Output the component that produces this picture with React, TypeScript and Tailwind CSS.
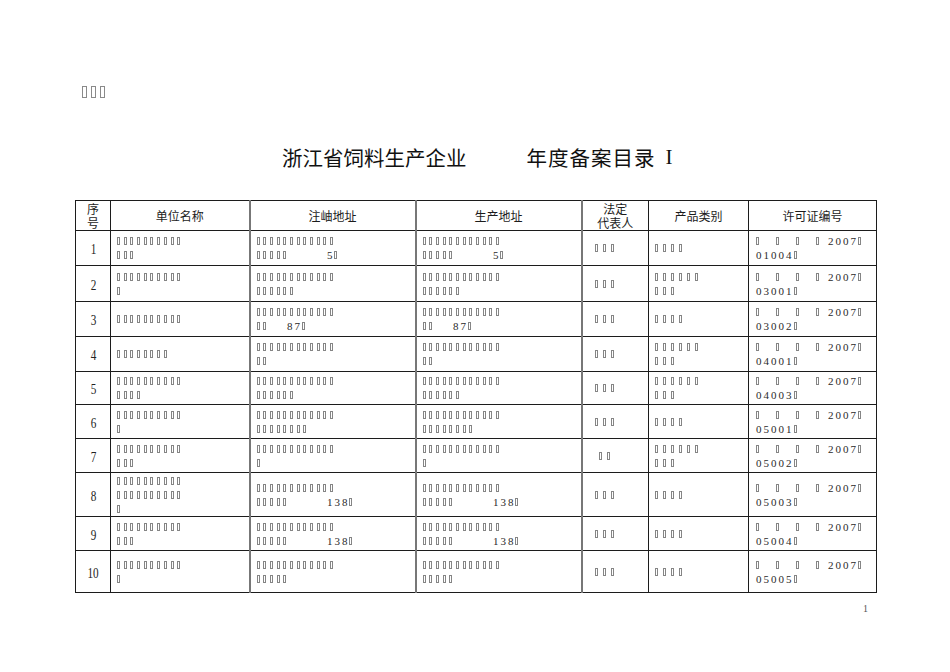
import React from "react";

// Tofu-box glyph spacing per column group
const PITCH: Record<string, string> = {
  narrow: "mr-[3.7px]",
  wide: "mr-[5px]",
  lic: "mr-[4px]",
};

const GAP: Record<string, string> = {
  "5": "w-[5px]",
  "13": "w-[13px]",
  "17": "w-[17px]",
  "37": "w-[37px]",
};

function Box({ pitch }: { pitch: string }) {
  return (
    <span
      className={`inline-block h-[8px] w-[3px] shrink-0 border border-[#858585] ${PITCH[pitch]}`}
    />
  );
}

// "□□□{37}5□" → boxes, gaps and digits
function Line({ text, pitch = "narrow" }: { text: string; pitch?: string }) {
  const parts = text.split(/(\{\d+\})/).filter(Boolean);
  const out: React.ReactNode[] = [];
  parts.forEach((part, i) => {
    const gap = part.match(/^\{(\d+)\}$/);
    if (gap) {
      out.push(<span key={i} className={`inline-block shrink-0 ${GAP[gap[1]]}`} />);
      return;
    }
    let run = "";
    const flush = (k: string) => {
      if (!run) return;
      out.push(
        <span
          key={k}
          className="font-['Liberation_Serif',serif] text-[11px] leading-[14px] tracking-[2px] text-[#2a2a2a]"
        >
          {run}
        </span>
      );
      run = "";
    };
    Array.from(part).forEach((ch, j) => {
      if (ch === "□") {
        flush(`${i}-${j}-t`);
        out.push(<Box key={`${i}-${j}`} pitch={pitch} />);
      } else {
        run += ch;
      }
    });
    flush(`${i}-end`);
  });
  return <div className="flex h-[14px] items-center whitespace-nowrap">{out}</div>;
}

const B = (n: number) => "□".repeat(n);
const ADDR5 = "□□□□□{37}5□";
const ADDR87 = "□□{17}87□";
const ADDR138 = "□□□□□{37}138□";

interface Row {
  n: string;
  h: string;
  name: string[];
  reg: string[];
  prod: string[];
  rep: string;
  cat: string[];
  lic: string;
}

const rows: Row[] = [
  { n: "1", h: "h-[35px]", name: [B(10), B(3)], reg: [B(12), ADDR5], prod: [B(12), ADDR5], rep: B(3), cat: [B(4)], lic: "01004□" },
  { n: "2", h: "h-[36px]", name: [B(10), B(1)], reg: [B(12), B(6)], prod: [B(12), B(6)], rep: B(3), cat: [B(6), B(3)], lic: "03001□" },
  { n: "3", h: "h-[35px]", name: [B(10)], reg: [B(12), ADDR87], prod: [B(12), ADDR87], rep: B(3), cat: [B(4)], lic: "03002□" },
  { n: "4", h: "h-[35px]", name: [B(8)], reg: [B(12), B(2)], prod: [B(12), B(2)], rep: B(3), cat: [B(6), B(3)], lic: "04001□" },
  { n: "5", h: "h-[33px]", name: [B(10), B(4)], reg: [B(12), B(6)], prod: [B(12), B(6)], rep: B(3), cat: [B(6), B(3)], lic: "04003□" },
  { n: "6", h: "h-[34px]", name: [B(10), B(1)], reg: [B(12), B(8)], prod: [B(12), B(8)], rep: B(3), cat: [B(4)], lic: "05001□" },
  { n: "7", h: "h-[34px]", name: [B(10), B(3)], reg: [B(12), B(1)], prod: [B(12), B(1)], rep: B(2), cat: [B(6), B(3)], lic: "05002□" },
  { n: "8", h: "h-[44px]", name: [B(10), B(10), B(1)], reg: [B(12), ADDR138], prod: [B(12), ADDR138], rep: B(3), cat: [B(4)], lic: "05003□" },
  { n: "9", h: "h-[34px]", name: [B(10), B(3)], reg: [B(12), ADDR138], prod: [B(12), ADDR138], rep: B(3), cat: [B(4)], lic: "05004□" },
  { n: "10", h: "h-[42px]", name: [B(10), B(1)], reg: [B(12), B(5)], prod: [B(12), B(5)], rep: B(3), cat: [B(4)], lic: "05005□" },
];

const cell = "border border-[#1c1c1c] p-0 align-middle";
const grayRight = "border-r-2 border-r-[#777]";
const head =
  "font-['Noto_Sans_CJK_SC',sans-serif] font-normal text-[12px] leading-[14px] text-[#1c1c1c] text-center";

export default function App() {
  return (
    <div className="h-[672px] w-[950px] overflow-hidden bg-white">
      {/* top-left mark */}
      <div className="flex gap-[4px] pl-[82px] pt-[86px]">
        <span className="inline-block h-[12px] w-[5px] border border-[#8a8a8a]" />
        <span className="inline-block h-[12px] w-[5px] border border-[#8a8a8a]" />
        <span className="inline-block h-[12px] w-[5px] border border-[#8a8a8a]" />
      </div>

      {/* title */}
      <div className="mt-[47px] flex h-[24px] items-center whitespace-nowrap pl-[282px] font-['Noto_Sans_CJK_SC',sans-serif] text-[#111]">
        <span className="text-[20.5px] leading-[24px]">浙江省饲料生产企业</span>
        <span className="w-[60px]" />
        <span className="text-[20.5px] leading-[24px] tracking-[1px]">年度备案目录</span>
        <span className="ml-[10px] font-['Liberation_Serif',serif] text-[21px] leading-[24px]">I</span>
      </div>

      {/* table */}
      <table className="ml-[75px] mt-[31px] w-[801px] table-fixed border-collapse">
        <colgroup>
          <col className="w-[35px]" />
          <col className="w-[139px]" />
          <col className="w-[166px]" />
          <col className="w-[166px]" />
          <col className="w-[67px]" />
          <col className="w-[100px]" />
          <col className="w-[128px]" />
        </colgroup>
        <thead>
          <tr className="h-[30px]">
            <th className={`${cell} ${head}`}>
              <div className="h-[14px]">序</div>
              <div className="h-[14px]">号</div>
            </th>
            <th className={`${cell} ${head} ${grayRight}`}>单位名称</th>
            <th className={`${cell} ${head} ${grayRight}`}>注岫地址</th>
            <th className={`${cell} ${head} ${grayRight}`}>生产地址</th>
            <th className={`${cell} ${head}`}>
              <div className="h-[14px]">法定</div>
              <div className="h-[14px]">代表人</div>
            </th>
            <th className={`${cell} ${head}`}>产品类别</th>
            <th className={`${cell} ${head}`}>许可证编号</th>
          </tr>
        </thead>
        <tbody>
          {rows.map((r) => (
            <tr key={r.n} className={r.h}>
              <td className={`${cell} text-center`}>
                <span className="inline-block scale-x-[0.8] font-['Liberation_Serif',serif] text-[14px] leading-[14px] text-[#222]">
                  {r.n}
                </span>
              </td>
              <td className={`${cell} ${grayRight} pl-[6px]`}>
                {r.name.map((l, i) => (
                  <Line key={i} text={l} />
                ))}
              </td>
              <td className={`${cell} ${grayRight} pl-[6px]`}>
                {r.reg.map((l, i) => (
                  <Line key={i} text={l} />
                ))}
              </td>
              <td className={`${cell} ${grayRight} pl-[6px]`}>
                {r.prod.map((l, i) => (
                  <Line key={i} text={l} />
                ))}
              </td>
              <td className={`${cell} pr-[17px]`}>
                <div className="flex justify-center">
                  <Line text={r.rep} pitch="wide" />
                </div>
              </td>
              <td className={`${cell} pl-[6px]`}>
                {r.cat.map((l, i) => (
                  <Line key={i} text={l} pitch="wide" />
                ))}
              </td>
              <td className={`${cell} pl-[7px]`}>
                <Line text="□{13}□{13}□{13}□{5}2007□" pitch="lic" />
                <Line text={r.lic} pitch="lic" />
              </td>
            </tr>
          ))}
        </tbody>
      </table>

      {/* page number */}
      <div className="ml-[863px] mt-[10px] font-['Liberation_Serif',serif] text-[10px] leading-[12px] text-[#555]">
        1
      </div>
    </div>
  );
}
